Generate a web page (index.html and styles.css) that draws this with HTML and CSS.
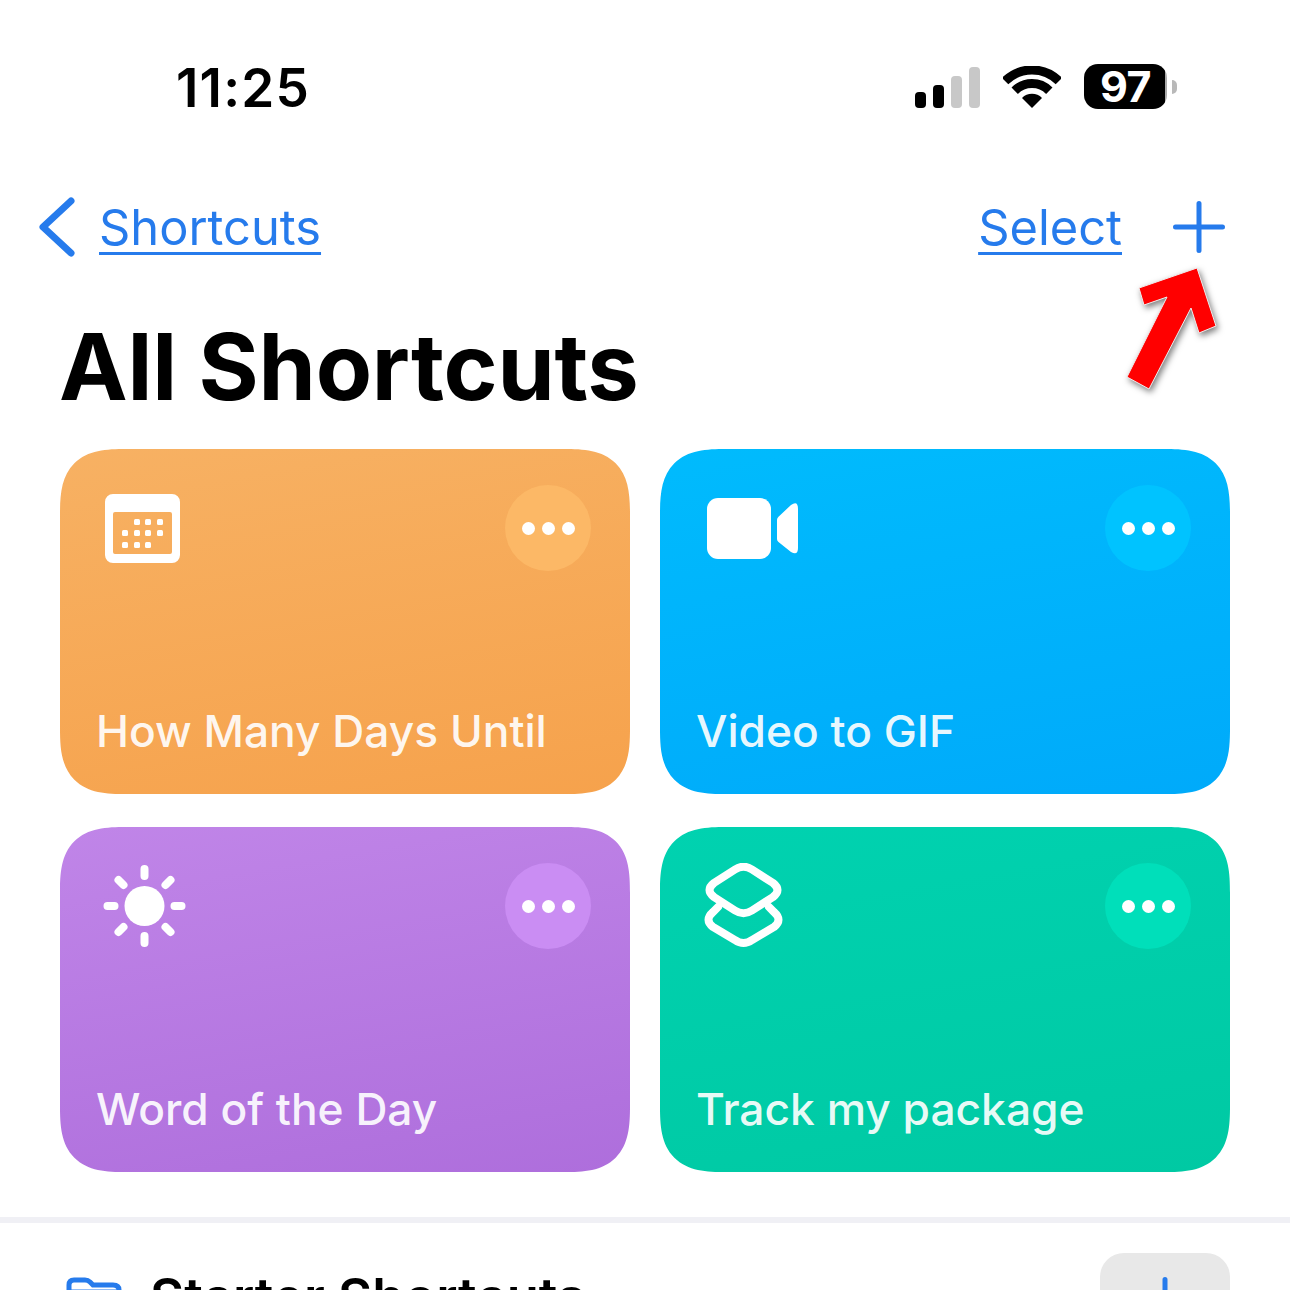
FILE: index.html

```html
<!DOCTYPE html>
<html lang="en">
<head>
    <meta charset="UTF-8">
    <meta name="viewport" content="width=device-width, initial-scale=1.0">
    <title>All Shortcuts</title>
    <link rel="stylesheet" href="styles.css">
</head>
<body>
    <div class="screen">
        <div class="status-bar">
            <span class="time">11:25</span>
            <div class="status-icons">
                <div class="signal">
                    <i class="bar b1"></i>
                    <i class="bar b2"></i>
                    <i class="bar b3 off"></i>
                    <i class="bar b4 off"></i>
                </div>
                <svg class="wifi" width="58" height="43" viewBox="0 0 58 43">
                    <path d="M2.1 15.1A38 38 0 0 1 55.9 15.1" fill="none" stroke="#000" stroke-width="9"/>
                    <path d="M11.7 24.7A24.5 24.5 0 0 1 46.3 24.7" fill="none" stroke="#000" stroke-width="9"/>
                    <path d="M29 42L19 32A14 14 0 0 1 39 32Z" fill="#000"/>
                </svg>
                <div class="battery">
                    <div class="battery-body">97</div>
                    <div class="battery-cap"></div>
                </div>
            </div>
        </div>

        <div class="nav">
            <a class="back">
                <svg width="36" height="60" viewBox="0 0 36 60">
                    <path d="M32 4L4 30L32 56" fill="none" stroke="#267bec" stroke-width="7" stroke-linecap="round" stroke-linejoin="round"/>
                </svg>
                <span class="link">Shortcuts</span>
            </a>
            <div class="nav-right">
                <span class="link">Select</span>
                <svg width="54" height="54" viewBox="0 0 54 54">
                    <path d="M27 3.500V50.500M3.500 27H50.500" fill="none" stroke="#267bec" stroke-width="5" stroke-linecap="round"/>
                </svg>
            </div>
        </div>

        <h1 class="title">All Shortcuts</h1>

        <div class="grid">
            <div class="card orange">
                <div class="card-top">
                    <svg class="icon" width="110" height="86" viewBox="0 0 110 86">
                        <path fill="#fff" fill-rule="evenodd" d="M16 9H75A8 8 0 0 1 83 17V70A8 8 0 0 1 75 78H16A8 8 0 0 1 8 70V17A8 8 0 0 1 16 9ZM18 27A2 2 0 0 0 16 29V67A2 2 0 0 0 18 69H73A2 2 0 0 0 75 67V29A2 2 0 0 0 73 27Z"/>
                        <g fill="#fff">
                            <rect x="37" y="34" width="6" height="6" rx="1.5"/>
                            <rect x="48" y="34" width="6" height="6" rx="1.5"/>
                            <rect x="60" y="34" width="6" height="6" rx="1.5"/>
                            <rect x="25" y="45" width="6" height="6" rx="1.5"/>
                            <rect x="37" y="45" width="6" height="6" rx="1.5"/>
                            <rect x="48" y="45" width="6" height="6" rx="1.5"/>
                            <rect x="60" y="45" width="6" height="6" rx="1.5"/>
                            <rect x="25" y="57" width="6" height="6" rx="1.5"/>
                            <rect x="37" y="57" width="6" height="6" rx="1.5"/>
                            <rect x="48" y="57" width="6" height="6" rx="1.5"/>
                        </g>
                    </svg>
                    <div class="more"><i></i><i></i><i></i></div>
                </div>
                <div class="card-name">How Many Days Until</div>
            </div>

            <div class="card blue">
                <div class="card-top">
                    <svg class="icon" width="110" height="86" viewBox="0 0 110 86">
                        <rect x="10" y="13" width="64" height="61" rx="11" fill="#fff"/>
                        <path fill="#fff" d="M80 35Q80 33 81.500 31.700L94 20Q101 15 101 24V63Q101 71 94 67L81.500 57Q80 56 80 54Z"/>
                    </svg>
                    <div class="more"><i></i><i></i><i></i></div>
                </div>
                <div class="card-name">Video to GIF</div>
            </div>

            <div class="card purple">
                <div class="card-top">
                    <svg class="icon" width="110" height="86" viewBox="0 0 110 86">
                        <circle cx="47.500" cy="43" r="20" fill="#fff"/>
                        <g stroke="#fff" stroke-width="8" stroke-linecap="round">
                            <path d="M47.500 6V13M47.500 73V80M10.500 43H17.500M77.500 43H84.500"/>
                            <path d="M21.500 17L26.500 22M68.500 64L73.500 69M73.500 17L68.500 22M26.500 64L21.500 69"/>
                        </g>
                    </svg>
                    <div class="more"><i></i><i></i><i></i></div>
                </div>
                <div class="card-name">Word of the Day</div>
            </div>

            <div class="card green">
                <div class="card-top">
                    <svg class="icon" width="110" height="90" viewBox="0 0 110 90">
                        <g fill="none" stroke="#fff" stroke-width="8" stroke-linecap="round">
                            <path d="M38 6.500Q46.500 1 55 6.500L76 20Q85 27 76 34L55 47.500Q46.500 53 38 47.500L17 34Q8 27 17 20Z"/>
                            <path d="M21 44L16 49Q7 57 16 64L38 77Q46.500 83 55 77L77 64Q86 57 77 49L72 44"/>
                        </g>
                    </svg>
                    <div class="more"><i></i><i></i><i></i></div>
                </div>
                <div class="card-name">Track my package</div>
            </div>
        </div>

        <div class="divider"></div>

        <div class="folder-row">
            <div class="folder-name">
                <svg width="56" height="46" viewBox="0 0 56 46">
                    <path d="M3 40V8Q3 3 8 3H19Q22 3 24 5L27 8H47Q53 8 53 13V40Q53 44 48 44H8Q3 44 3 40ZM3 15H53" fill="none" stroke="#267bec" stroke-width="5"/>
                </svg>
                <span>Starter Shortcuts</span>
            </div>
            <div class="add-btn">
                <svg width="54" height="54" viewBox="0 0 54 54">
                    <path d="M27 3.500V50.500M3.500 27H50.500" fill="none" stroke="#267bec" stroke-width="5" stroke-linecap="round"/>
                </svg>
            </div>
        </div>

        <!-- annotation drawn over the screenshot -->
        <svg class="arrow" width="110" height="140" viewBox="0 0 110 140">
            <path d="M77 8L19 28L24 45L47 37L7 117L29 129L71 48L79 73L96 66Z" fill="#ff0000" stroke="#eee" stroke-width="1"/>
        </svg>
    </div>
</body>
</html>
```

FILE: styles.css

```css
* {
    margin: 0;
    padding: 0;
    box-sizing: border-box;
    font-family: Inter, "Liberation Sans", sans-serif;
}
body {
    background: #fff;
    overflow: hidden;
}
.screen {
    position: relative;
    height: 1290px;
    overflow: hidden;
}
.status-bar {
    display: flex;
    justify-content: space-between;
    align-items: center;
    height: 174px;
    padding: 0 113px 0 176px;
}
.time {
    padding-top: 2px;
    font-size: 53px;
    font-weight: 600;
    color: #000;
    letter-spacing: 1.2px;
}
.status-icons {
    display: flex;
    align-items: flex-end;
    gap: 23px;
    padding-bottom: 1px;
}
.signal {
    display: flex;
    align-items: flex-end;
    gap: 7px;
    margin-bottom: 1px;
}
.bar {
    display: block;
    width: 11px;
    border-radius: 4px;
    background: #000;
}
.bar.off {
    background: #c8c8c8;
}
.b1 { height: 16px; }
.b2 { height: 23px; }
.b3 { height: 32px; }
.b4 { height: 41px; }
.battery {
    display: flex;
    align-items: center;
    gap: 5px;
}
.battery-body {
    width: 83px;
    height: 45px;
    border-radius: 14px;
    background: linear-gradient(90deg, #000 97%, #aaa 97%);
    color: #fff;
    font-size: 43px;
    font-weight: 700;
    line-height: 45px;
    text-align: center;
    letter-spacing: -0.5px;
}
.battery-cap {
    width: 5px;
    height: 14px;
    border-radius: 0 5px 5px 0;
    background: #b9b9b9;
}
.nav {
    display: flex;
    justify-content: space-between;
    align-items: center;
    height: 106px;
    padding: 0 64px 0 39px;
}
.back {
    display: flex;
    align-items: center;
    gap: 24px;
}
.link {
    color: #267bec;
    font-size: 48.8px;
    text-decoration: underline;
    text-decoration-thickness: 3px;
    text-underline-offset: 7px;
}
.nav-right {
    display: flex;
    align-items: center;
    gap: 50px;
}
.title {
    height: 169px;
    padding-top: 34px;
    padding-left: 59px;
    font-size: 92px;
    font-weight: 700;
    line-height: 106px;
    letter-spacing: -0.2px;
    color: #000;
}
.grid {
    display: grid;
    grid-template-columns: 570px 570px;
    grid-auto-rows: 345px;
    column-gap: 30px;
    row-gap: 33px;
    padding: 0 60px;
}
.card {
    display: flex;
    flex-direction: column;
    justify-content: space-between;
    padding: 36px 39px 37px 37px;
    border-radius: 66px;
    corner-shape: superellipse(1.5);
    color: rgba(255, 255, 255, 0.92);
}
.orange { background: linear-gradient(170deg, #f7b163, #f6a24c); }
.blue { background: linear-gradient(170deg, #00bbfd, #00aafa); }
.purple { background: linear-gradient(170deg, #c085e8, #ae6edc); }
.green { background: linear-gradient(170deg, #00d2b0, #00c9a3); }
.more {
    display: flex;
    justify-content: center;
    align-items: center;
    gap: 7px;
    width: 86px;
    height: 86px;
    border-radius: 50%;
}
.orange .more { background: #fcb866; }
.blue .more { background: #00c3ff; }
.purple .more { background: #ca8df3; }
.green .more { background: #00dfba; }
.card-top {
    display: flex;
    justify-content: space-between;
    align-items: flex-start;
}
.more i {
    display: block;
    width: 13px;
    height: 13px;
    border-radius: 50%;
    background: #fff;
}
.card-name {
    margin-left: -1px;
    font-size: 44.3px;
    font-weight: 500;
    line-height: 52px;
}
.divider {
    height: 6px;
    margin-top: 45px;
    background: #f0f0f5;
}
.folder-row {
    display: flex;
    justify-content: space-between;
    align-items: flex-start;
    padding: 30px 60px 0 66px;
}
.folder-name {
    display: flex;
    align-items: flex-start;
    gap: 28px;
    padding-top: 12px;
    font-size: 52.5px;
    font-weight: 600;
    color: #000;
}
.folder-name svg {
    margin-top: 12px;
}
.add-btn {
    display: flex;
    justify-content: center;
    align-items: center;
    width: 130px;
    height: 100px;
    border-radius: 24px;
    background: #e8e8e8;
}
.arrow {
    position: absolute;
    left: 1120px;
    top: 260px;
    filter: drop-shadow(2px 3px 3px rgba(0, 0, 0, 0.5));
}
```
